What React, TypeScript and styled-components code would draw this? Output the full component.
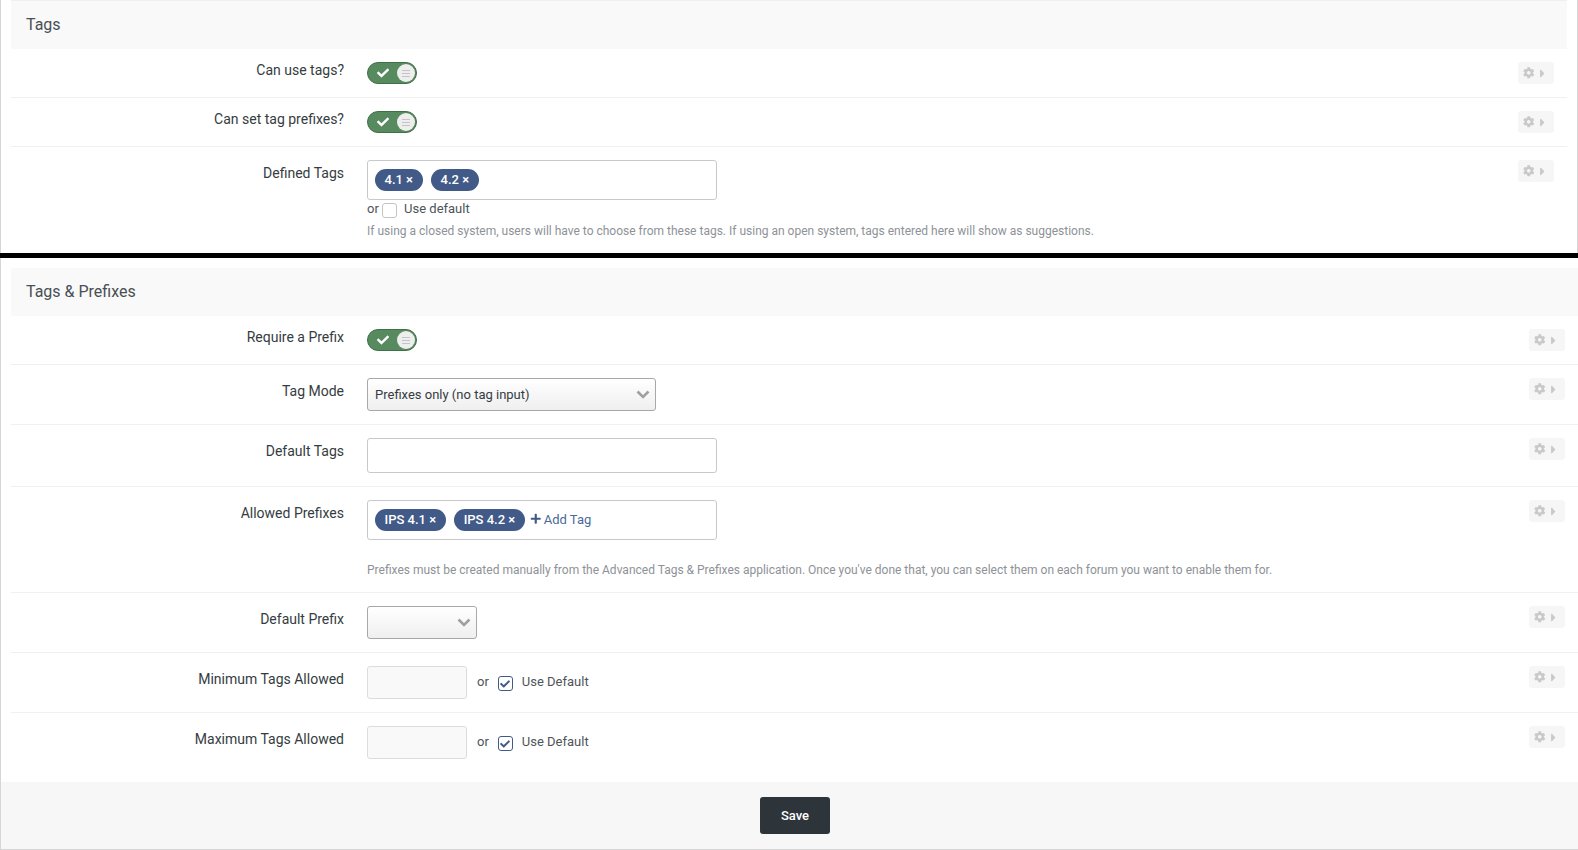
import React from "react";
import styled, { createGlobalStyle } from "styled-components";
import { FaCheck, FaCog, FaCaretRight, FaPlus } from "react-icons/fa";

const Global = createGlobalStyle`
  html, body { margin: 0; padding: 0; background: #fff; }
  body { font-family: Roboto, "Liberation Sans", sans-serif; font-size: 14px; color: #353c41; overflow: hidden; }
`;

const Page = styled.div`
  width: 1578px;
  height: 850px;
  display: flex;
  flex-direction: column;
  overflow: hidden;
`;

const TopPanel = styled.section`
  height: 253px;
  box-sizing: border-box;
  padding: 0 10px 0 10px;
  border-left: 1px solid #d6d6d6;
  border-right: 1px solid #d6d6d6;
`;

const Divider = styled.div`
  height: 5px;
  background: #000;
  flex: none;
`;

const BottomPanel = styled.section`
  flex: 1;
  display: flex;
  flex-direction: column;
  padding-top: 10px;
  border-left: 1px solid #d6d6d6;
  min-height: 0;
`;

const BottomBody = styled.div`
  flex: 1;
  padding-left: 10px;
`;

const Header = styled.h2<{ $h: number; $top?: boolean }>`
  margin: 0;
  height: ${(p) => p.$h}px;
  box-sizing: border-box;
  background: #f9f9f9;
  border-top: 1px solid ${(p) => (p.$top ? "#f0f0f0" : "#f9f9f9")};
  font-size: 16px;
  font-weight: 400;
  line-height: ${(p) => (p.$top ? 48 : 46)}px;
  padding-left: 15px;
  color: #4a4f53;
`;

const Row = styled.div<{ $h: number; $last?: boolean }>`
  height: ${(p) => p.$h}px;
  box-sizing: border-box;
  display: grid;
  grid-template-columns: 333px 1fr 60px;
  column-gap: 23px;
  border-bottom: ${(p) => (p.$last ? "none" : "1px solid #f0f0f0")};
  padding-top: 13px;
`;

const Label = styled.label<{ $input?: boolean }>`
  text-align: right;
  font-size: 14px;
  line-height: 17px;
  color: #353c41;
  margin-top: ${(p) => (p.$input ? 5 : 0)}px;
`;

const Field = styled.div`
  min-width: 0;
`;

const SettingsButton = styled.div`
  justify-self: end;
  margin-right: 13px;
  width: 36px;
  height: 22px;
  border-radius: 3px;
  background: #f6f6f6;
  color: #c9c9c9;
  display: flex;
  align-items: center;
  justify-content: center;
  gap: 1px;
  font-size: 11.5px;
  svg:last-child { font-size: 13px; }
`;

const Toggle = styled.div`
  width: 50px;
  height: 22px;
  box-sizing: border-box;
  border-radius: 11px;
  background: #578a5e;
  border: 1px solid #3f7148;
  display: flex;
  align-items: center;
  justify-content: space-between;
  padding: 0 1px 0 9px;
  color: #fff;
  font-size: 12px;
`;

const Knob = styled.span`
  width: 18px;
  height: 18px;
  border-radius: 50%;
  background: #eeeeee;
  display: flex;
  flex-direction: column;
  align-items: center;
  justify-content: center;
  gap: 2px;
  i { display: block; width: 8px; height: 1px; background: #c4c4c4; }
`;

const TagBox = styled.div<{ $h: number }>`
  width: 350px;
  height: ${(p) => p.$h}px;
  box-sizing: border-box;
  border: 1px solid #c9c9c9;
  border-radius: 3px;
  background: #fff;
  display: flex;
  align-items: center;
  padding: 0 7px;
  gap: 8px;
`;

const Pill = styled.span`
  height: 22px;
  border-radius: 11px;
  background: #415a88;
  color: #fff;
  font-size: 13px;
  font-weight: 500;
  line-height: 22px;
  padding: 0 10px 0 9.5px;
  white-space: nowrap;
  flex: none;
`;

const AddTag = styled.span`
  display: inline-flex;
  align-items: center;
  gap: 2px;
  color: #4a6a9b;
  font-size: 13px;
  line-height: 17px;
  margin-left: -3px;
  position: relative;
  top: -1px;
  svg { color: #415a88; font-size: 11.5px; }
`;

const OrLine = styled.div`
  display: flex;
  align-items: center;
  height: 17px;
  font-size: 13px;
  color: #4e5459;
`;

const Check = styled.span<{ $on?: boolean }>`
  width: 15px;
  height: 15px;
  box-sizing: border-box;
  border: 1px solid ${(p) => (p.$on ? "#415a88" : "#c4c4c4")};
  border-radius: 3px;
  background: #fff;
  display: inline-flex;
  align-items: center;
  justify-content: center;
  color: #415a88;
  font-size: 10px;
  flex: none;
  position: relative;
  top: 2px;
`;

const CheckLabel = styled.span`
  margin-left: 7px;
`;

const Help = styled.p<{ $mt: number }>`
  margin: ${(p) => p.$mt}px 0 0;
  font-size: 12px;
  line-height: 17px;
  color: #8e9297;
`;

const Select = styled.div<{ $w: number }>`
  width: ${(p) => p.$w}px;
  height: 33px;
  box-sizing: border-box;
  border: 1px solid #a8a8a8;
  border-radius: 3px;
  background: linear-gradient(#ffffff, #efefef);
  display: flex;
  align-items: center;
  justify-content: space-between;
  padding: 0 5px 0 7px;
  font-size: 13px;
  color: #353c41;
  svg { flex: none; }
`;

const NumberRow = styled.div`
  display: flex;
  align-items: center;
  font-size: 13px;
  color: #4e5459;
`;

const NumInput = styled.div`
  width: 100px;
  height: 33px;
  box-sizing: border-box;
  border: 1px solid #dcdcdc;
  border-radius: 3px;
  background: #f9f9f9;
`;

const Or = styled.span`
  margin: 0 10px;
  position: relative;
  top: -1px;
`;

const DefaultText = styled.span`
  margin-left: 9px;
  position: relative;
  top: -1px;
`;

const NumberCheck = styled(Check)`
  top: 1px;
  margin-left: -1px;
`;

const Footer = styled.div`
  height: 68px;
  flex: none;
  box-sizing: border-box;
  background: #f7f7f7;
  border-bottom: 1px solid #d6d6d6;
  display: flex;
  align-items: flex-start;
  justify-content: center;
  padding-top: 15px;
`;

const SaveButton = styled.button`
  width: 70px;
  height: 37px;
  border: none;
  border-radius: 3px;
  background: #2d343a;
  color: #fff;
  font-family: inherit;
  font-size: 13px;
  font-weight: 500;
  margin-left: 11px;
`;

const Chevron = () => (
  <svg width="14" height="9" viewBox="0 0 14 9" aria-hidden="true">
    <path d="M1.5 1.5 L7 7 L12.5 1.5" fill="none" stroke="#a0a0a0" strokeWidth="2.6" />
  </svg>
);

const Settings = () => (
  <SettingsButton>
    <FaCog />
    <FaCaretRight />
  </SettingsButton>
);

const Switch = () => (
  <Toggle>
    <FaCheck />
    <Knob>
      <i />
      <i />
      <i />
    </Knob>
  </Toggle>
);

const UseDefault = ({ text }: { text: string }) => (
  <>
    <NumberCheck $on>
      <FaCheck />
    </NumberCheck>
    <DefaultText>{text}</DefaultText>
  </>
);

export default function App() {
  return (
    <Page>
      <Global />
      <TopPanel>
        <Header $h={49} $top>Tags</Header>
        <Row $h={49}>
          <Label>Can use tags?</Label>
          <Field><Switch /></Field>
          <Settings />
        </Row>
        <Row $h={49}>
          <Label>Can set tag prefixes?</Label>
          <Field><Switch /></Field>
          <Settings />
        </Row>
        <Row $h={106} $last>
          <Label $input>Defined Tags</Label>
          <Field>
            <TagBox $h={40}>
              <Pill>4.1 ×</Pill>
              <Pill>4.2 ×</Pill>
            </TagBox>
            <OrLine>
              or&nbsp;
              <Check />
              <CheckLabel>Use default</CheckLabel>
            </OrLine>
            <Help $mt={6}>
              If using a closed system, users will have to choose from these tags. If using an open system, tags entered here will show as suggestions.
            </Help>
          </Field>
          <Settings />
        </Row>
      </TopPanel>
      <Divider />
      <BottomPanel>
        <BottomBody>
          <Header $h={48}>Tags &amp; Prefixes</Header>
          <Row $h={49}>
            <Label>Require a Prefix</Label>
            <Field><Switch /></Field>
            <Settings />
          </Row>
          <Row $h={60}>
            <Label $input>Tag Mode</Label>
            <Field>
              <Select $w={289}>
                Prefixes only (no tag input)
                <Chevron />
              </Select>
            </Field>
            <Settings />
          </Row>
          <Row $h={62}>
            <Label $input>Default Tags</Label>
            <Field><TagBox $h={35} /></Field>
            <Settings />
          </Row>
          <Row $h={106}>
            <Label $input>Allowed Prefixes</Label>
            <Field>
              <TagBox $h={40}>
                <Pill>IPS 4.1 ×</Pill>
                <Pill>IPS 4.2 ×</Pill>
                <AddTag><FaPlus />Add Tag</AddTag>
              </TagBox>
              <Help $mt={22}>
                Prefixes must be created manually from the Advanced Tags &amp; Prefixes application. Once you've done that, you can select them on each forum you want to enable them for.
              </Help>
            </Field>
            <Settings />
          </Row>
          <Row $h={60}>
            <Label $input>Default Prefix</Label>
            <Field>
              <Select $w={110}>
                <span />
                <Chevron />
              </Select>
            </Field>
            <Settings />
          </Row>
          <Row $h={60}>
            <Label $input>Minimum Tags Allowed</Label>
            <Field>
              <NumberRow>
                <NumInput />
                <Or>or</Or>
                <UseDefault text="Use Default" />
              </NumberRow>
            </Field>
            <Settings />
          </Row>
          <Row $h={69} $last>
            <Label $input>Maximum Tags Allowed</Label>
            <Field>
              <NumberRow>
                <NumInput />
                <Or>or</Or>
                <UseDefault text="Use Default" />
              </NumberRow>
            </Field>
            <Settings />
          </Row>
        </BottomBody>
        <Footer>
          <SaveButton>Save</SaveButton>
        </Footer>
      </BottomPanel>
    </Page>
  );
}
